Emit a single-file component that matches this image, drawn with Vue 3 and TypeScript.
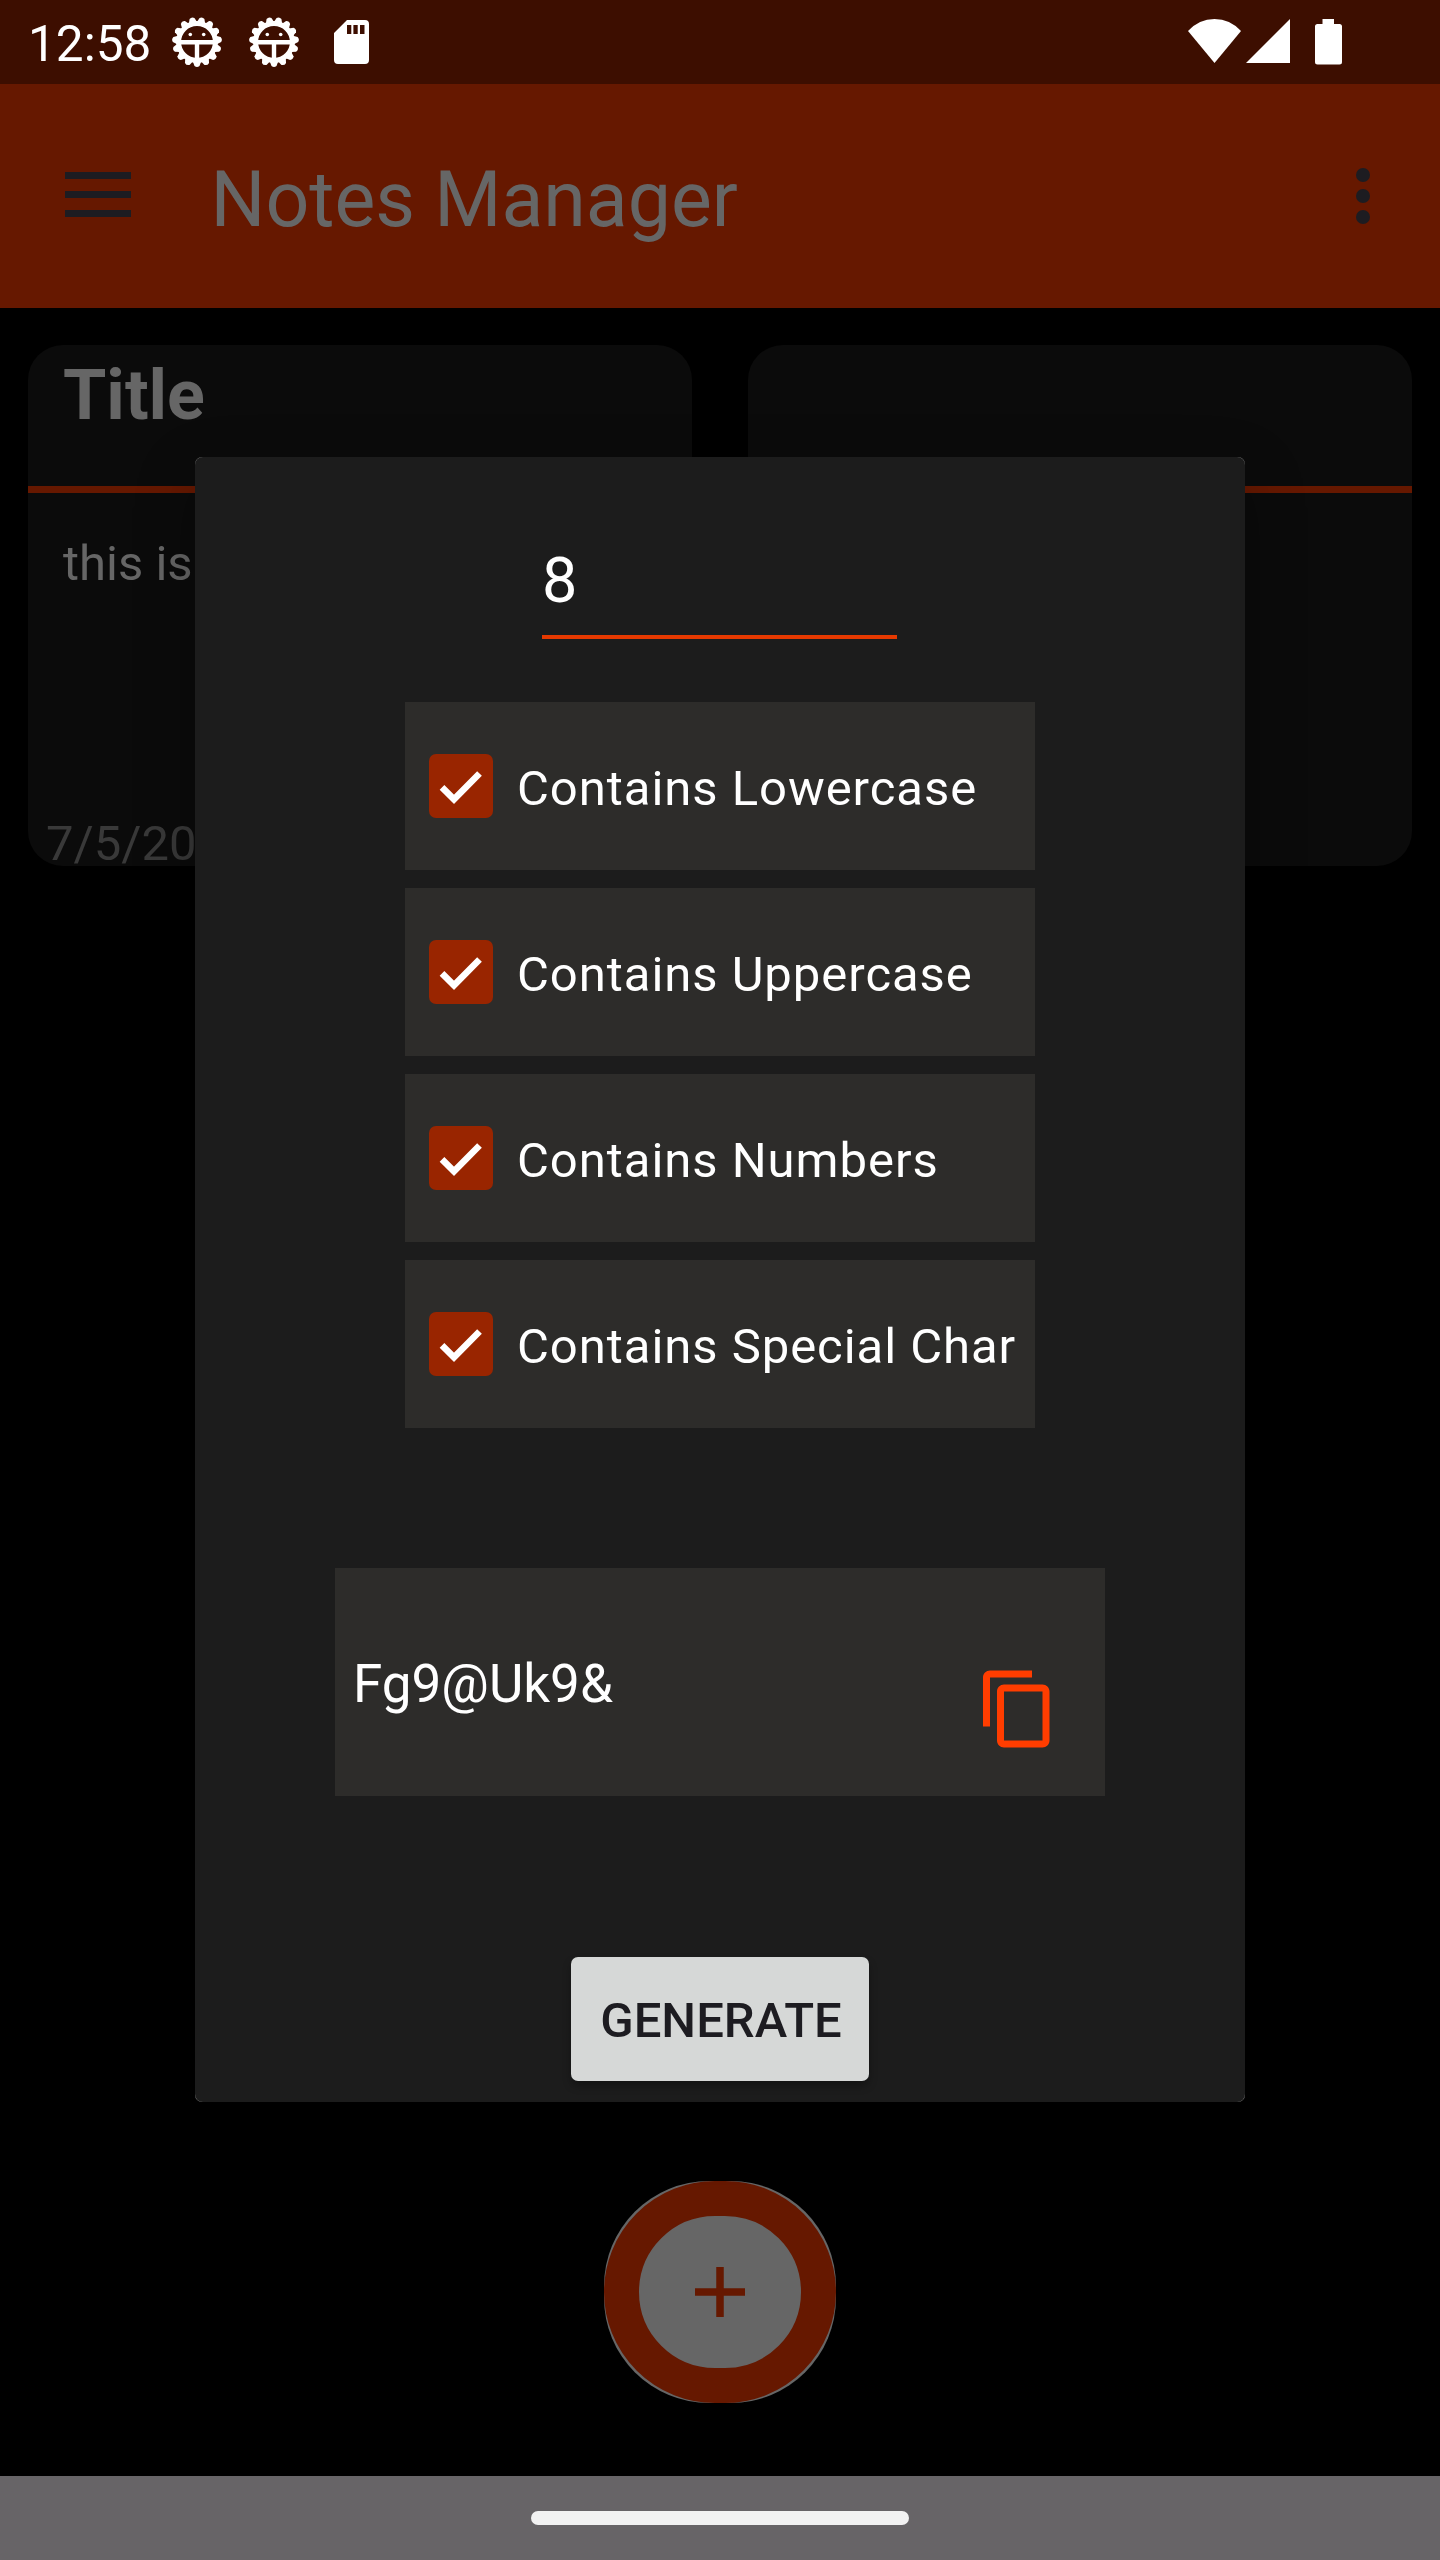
<script setup lang="ts">
import { ref } from 'vue'

interface Note {
  title: string
  body: string
  date: string
}

interface Option {
  label: string
  checked: boolean
}

const notes: Note[] = [
  { title: 'Title', body: 'this is', date: '7/5/20' },
  { title: '', body: '', date: '' },
]

const options = ref<Option[]>([
  { label: 'Contains Lowercase', checked: true },
  { label: 'Contains Uppercase', checked: true },
  { label: 'Contains Numbers', checked: true },
  { label: 'Contains Special Char', checked: true },
])

const length = ref('8')
const password = ref('Fg9@Uk9&')
const teeth = Array.from({ length: 15 }, (_, i) => 12 + i * 24)
</script>

<template>
  <div class="screen">
    <header class="status">
      <span class="time">12:58</span>
      <svg v-for="n in 2" :key="n" class="bug" viewBox="-26 -26 52 52">
        <path
          v-for="a in teeth"
          :key="a"
          :transform="`rotate(${a})`"
          d="M-4.200-19.500 -2.500-24 Q0-26 2.500-24 L4.200-19.500Z"
          fill="#fff"
        />
        <circle r="18.4" fill="none" stroke="#fff" stroke-width="5" />
        <path d="M-17 0.200H17M0 0V18" stroke="#fff" stroke-width="4.400" />
        <circle cx="-6.7" cy="-7.5" r="1.8" fill="#fff" />
        <circle cx="6.7" cy="-7.5" r="1.8" fill="#fff" />
      </svg>
      <svg class="sd" viewBox="0 0 35 44">
        <path
          fill="#fff"
          fill-rule="evenodd"
          d="M13 0H31Q35 0 35 4V40Q35 44 31 44H4Q0 44 0 40V13ZM13 5V14H17.300V5ZM19.400 5V14H23.700V5ZM26 5V14H30.500V5Z"
        />
      </svg>
      <svg class="wifi" viewBox="0 0 53 44"><path fill="#fff" d="M26.500 44 0 12Q11 0 26.500 0T53 12Z" /></svg>
      <svg class="signal" viewBox="0 0 44 44"><path fill="#fff" d="M44 0V44H0Z" /></svg>
      <svg class="battery" viewBox="0 0 27 46">
        <path fill="#fff" d="M7.500 0H19V5H24.500Q27 5 27 7.500V43Q27 45.500 24.500 45.500H2.500Q0 45.500 0 43V7.500Q0 5 2.500 5H7.500Z" />
      </svg>
    </header>

    <div class="appbar">
      <svg class="menu" viewBox="0 0 66 46">
        <path fill="#1d1c21" d="M0 0H66V7H0ZM0 19H66V26H0ZM0 38H66V45H0Z" />
      </svg>
      <h1>Notes Manager</h1>
      <svg class="more" viewBox="0 0 14 56">
        <g fill="#1d1c21"><circle cx="7" cy="7" r="7" /><circle cx="7" cy="28" r="7" /><circle cx="7" cy="49" r="7" /></g>
      </svg>
    </div>

    <main class="grid">
      <article v-for="(note, i) in notes" :key="i" class="note">
        <h2>{{ note.title }}</h2>
        <hr />
        <p class="body">{{ note.body }}</p>
        <p class="date">{{ note.date }}</p>
      </article>
    </main>

    <button class="fab" aria-label="Add note">
      <span class="ring">
        <svg viewBox="0 0 50 50"><path d="M0 25H50M25 0V50" stroke="#661800" stroke-width="7.500" /></svg>
      </span>
    </button>

    <footer class="nav"><span class="handle"></span></footer>

    <section class="dialog">
      <div class="sheet">
        <div class="length">{{ length }}</div>
        <div class="options">
          <div v-for="o in options" :key="o.label" class="option" @click="o.checked = !o.checked">
            <span class="box">
              <svg v-if="o.checked" viewBox="0 0 64 64">
                <path d="M13 33.300 25 45.300 50.500 19.500" fill="none" stroke="#fff" stroke-width="6.600" />
              </svg>
            </span>
            <span class="label">{{ o.label }}</span>
          </div>
        </div>
        <div class="result">
          <span class="password">{{ password }}</span>
          <svg class="copy" viewBox="0 0 24 24">
            <path
              fill="#ff3d00"
              d="M16 1H4c-1.100 0-2 .9-2 2v14h2V3h12V1zm3 4H8c-1.100 0-2 .9-2 2v14c0 1.100.9 2 2 2h11c1.100 0 2-.9 2-2V7c0-1.100-.9-2-2-2zm0 16H8V7h11v14z"
            />
          </svg>
        </div>
        <button class="generate">GENERATE</button>
      </div>
    </section>
  </div>
</template>

<style>
body {
  margin: 0;
  background: #000;
}
</style>

<style scoped>
.screen {
  position: relative;
  display: flex;
  flex-direction: column;
  width: 1440px;
  height: 2560px;
  overflow: hidden;
  background: #000;
  font-family: Roboto, 'Liberation Sans', sans-serif;
}
h1,
h2,
p {
  margin: 0;
}
button {
  border: 0;
  padding: 0;
  font-family: inherit;
}
svg {
  display: block;
  flex: none;
}
.status {
  display: flex;
  align-items: flex-start;
  height: 84px;
  background: #3d0e00;
}
.time {
  width: 143px;
  margin-left: 28px;
  padding-top: 15px;
  font-size: 49.5px;
  line-height: 58px;
  color: #fff;
}
.bug {
  width: 52px;
  height: 52px;
  margin-top: 16px;
  margin-right: 25px;
}
.sd {
  width: 35px;
  height: 44px;
  margin-top: 20px;
  margin-left: 9px;
}
.wifi {
  width: 53px;
  height: 44px;
  margin-top: 19px;
  margin-left: auto;
}
.signal {
  width: 44px;
  height: 44px;
  margin-top: 19px;
  margin-left: 5px;
}
.battery {
  width: 27px;
  height: 46px;
  margin-top: 19px;
  margin-left: 25px;
  margin-right: 98px;
}
.appbar {
  display: flex;
  align-items: flex-start;
  height: 224px;
  background: #661800;
}
.menu {
  width: 66px;
  height: 46px;
  margin: 88px 0 0 65px;
}
h1 {
  margin: 71px 0 0 79.5px;
  font-size: 77px;
  line-height: 90px;
  font-weight: 400;
  color: #666;
}
.more {
  width: 14px;
  height: 56px;
  margin: 84px 70px 0 auto;
}
.grid {
  display: grid;
  grid-template-columns: 664px 664px;
  gap: 56px;
  margin: 37px 28px 0;
}
.note {
  display: flex;
  flex-direction: column;
  height: 521px;
  border-radius: 35px;
  background: #0b0b0b;
}
h2 {
  height: 141px;
  padding: 9px 0 0 35px;
  box-sizing: border-box;
  font-size: 70px;
  line-height: 82px;
  font-weight: 700;
  color: #666;
}
hr {
  width: 100%;
  height: 7px;
  margin: 0;
  border: 0;
  background: #661800;
}
.body {
  padding: 42px 0 0 35px;
  font-size: 49px;
  line-height: 57px;
  color: #666;
}
.date {
  margin-top: auto;
  padding-left: 18px;
  font-size: 49px;
  line-height: 45px;
  color: #393939;
}
.fab {
  display: flex;
  align-self: center;
  width: 232px;
  height: 222px;
  margin-top: auto;
  margin-bottom: 73px;
  border-radius: 105px;
  background: #666;
}
.ring {
  display: flex;
  align-items: center;
  justify-content: center;
  box-sizing: border-box;
  width: 100%;
  height: 100%;
  border: 35px solid #661800;
  border-radius: 111px;
}
.ring svg {
  width: 50px;
  height: 50px;
}
.nav {
  display: flex;
  align-items: center;
  justify-content: center;
  height: 84px;
  background: #676467;
}
.handle {
  width: 378px;
  height: 14px;
  border-radius: 7px;
  background: #f2f2f2;
}
.dialog {
  position: absolute;
  left: 195px;
  top: 457px;
  width: 1050px;
  height: 1645px;
  border-radius: 7px;
  background: #777;
  box-shadow: 0 20px 60px rgba(0, 0, 0, 0.3);
}
.sheet {
  display: flex;
  flex-direction: column;
  align-items: center;
  height: 100%;
  border-radius: 8px;
  background: #1c1c1c;
}
.length {
  width: 355px;
  height: 95px;
  margin-top: 87px;
  margin-right: 1px;
  font-size: 63px;
  line-height: 74px;
  color: #fff;
  border-bottom: 4px solid #e63900;
  box-sizing: border-box;
}
.options {
  display: flex;
  flex-direction: column;
  gap: 18px;
  margin-top: 63px;
}
.option {
  display: flex;
  align-items: center;
  box-sizing: border-box;
  width: 630px;
  height: 168px;
  padding-left: 24px;
  background: #2d2c2a;
}
.box {
  width: 64px;
  height: 64px;
  border-radius: 7px;
  background: #992500;
}
.label {
  margin-left: 24px;
  padding-top: 4px;
  font-size: 49px;
  line-height: 57px;
  letter-spacing: 0.96px;
  white-space: nowrap;
  color: #fff;
}
.result {
  display: flex;
  align-items: flex-start;
  justify-content: space-between;
  width: 770px;
  height: 228px;
  margin-top: 140px;
  background: #2d2c2a;
}
.password {
  margin: 85px 0 0 18px;
  font-size: 53px;
  line-height: 62px;
  color: #fff;
}
.copy {
  width: 84px;
  height: 84px;
  margin: 99px 45px 0 0;
}
.generate {
  width: 298px;
  height: 124px;
  margin-top: 161px;
  padding: 3px 0 0 2px;
  border-radius: 7px;
  background: #d6d8d7;
  font-size: 49px;
  line-height: 57px;
  font-weight: 500;
  color: #1d1c21;
  box-shadow: 0 5px 9px rgba(0, 0, 0, 0.3);
}
</style>
